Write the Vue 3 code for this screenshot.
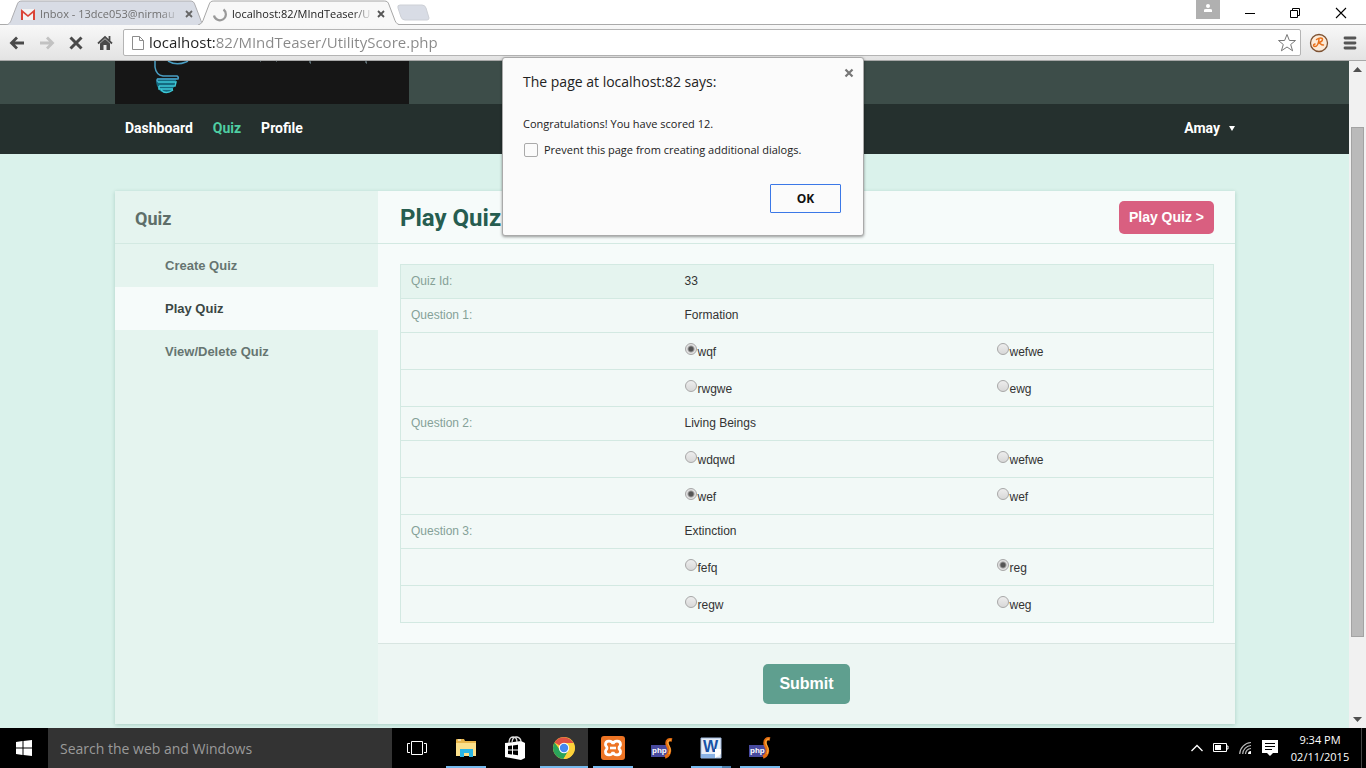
<script setup>
import { ref, reactive } from 'vue'

const quizId = 33
const questions = reactive([
  { title: 'Formation', options: ['wqf', 'wefwe', 'rwgwe', 'ewg'], answer: 0 },
  { title: 'Living Beings', options: ['wdqwd', 'wefwe', 'wef', 'wef'], answer: 2 },
  { title: 'Extinction', options: ['fefq', 'reg', 'regw', 'weg'], answer: 1 }
])
const optionRows = [[0, 1], [2, 3]]
const menu = ['Create Quiz', 'Play Quiz', 'View/Delete Quiz']
const url = ref('localhost:82/MIndTeaser/UtilityScore.php')
const search = ref('')
const prevent = ref(false)
const scroll = { top: '7.7%', height: '80.6%' }
</script>

<template>
  <div class="desktop">
    <div class="tabstrip">
      <div class="tab">
        <svg class="tab-shape" viewBox="0 0 198 25" preserveAspectRatio="none"><path d="M0 25C4 24 5 21 6 18L11 5C12 2 13 1 16 1H184C187 1 188 2 189 5L194 18C195 21 196 24 198 25" fill="#d8dce5" stroke="#adadb0" /></svg>
        <svg class="fav" width="16" height="16" viewBox="0 0 16 16"><path d="M1 3h14v11H1z" fill="#f3f3f3" /><path d="M1 14V3l7 6 7-6v11h-2V7l-5 4-5-4v7z" fill="#db4437" /></svg>
        <span class="tab-title">Inbox - 13dce053@nirmau</span>
        <button class="tab-x" aria-label="Close tab"><svg width="8" height="8" viewBox="0 0 8 8"><path d="M1 1l6 6M7 1L1 7" stroke="#666" stroke-width="1.800" /></svg></button>
      </div>
      <div class="tab current">
        <svg class="tab-shape" viewBox="0 0 204 25" preserveAspectRatio="none"><path d="M0 25C4 24 5 21 6 18L11 5C12 2 13 1 16 1H188C191 1 192 2 193 5L198 18C199 21 200 24 204 25" fill="#f8f8f8" stroke="#a5a5a5" /></svg>
        <svg class="fav" width="16" height="16" viewBox="0 0 16 16"><path d="M11.500 3.500A6 6 0 1 1 2 9.500" fill="none" stroke="#999" stroke-width="2.200" /></svg>
        <span class="tab-title">localhost:82/MIndTeaser/U</span>
        <button class="tab-x" aria-label="Close tab"><svg width="8" height="8" viewBox="0 0 8 8"><path d="M1 1l6 6M7 1L1 7" stroke="#555" stroke-width="1.800" /></svg></button>
      </div>
      <button class="newtab" aria-label="New tab"><svg width="34" height="18" viewBox="0 0 34 18"><path d="M4 1h22q3 0 4 3l3 10q0 2-2 2H9q-3 0-4-3L2 4q-1-3 2-3z" fill="#d8dce5" stroke="#cdd0d6" /></svg></button>
      <div class="win">
        <button class="avatar" aria-label="Profile"><svg width="24" height="19" viewBox="0 0 24 19"><circle cx="12" cy="6" r="2" fill="#fff" /><path d="M8 12V10q0-1 2-1h4q2 0 2 1v2z" fill="#fff" /></svg></button>
        <button aria-label="Minimize"><svg width="46" height="24" viewBox="0 0 46 24"><path d="M17 13.500h10" stroke="#000" /></svg></button>
        <button aria-label="Restore"><svg width="46" height="24" viewBox="0 0 46 24"><path d="M16.500 10.500h7v7h-7zM18.500 10.500v-2h7v7h-2" fill="none" stroke="#000" /></svg></button>
        <button aria-label="Close"><svg width="46" height="24" viewBox="0 0 46 24"><path d="M16 8l10 10M26 8L16 18" stroke="#000" stroke-width="1.100" /></svg></button>
      </div>
    </div>

    <div class="toolbar">
      <button aria-label="Back"><svg width="16" height="14" viewBox="0 0 16 14"><path d="M15 7H3M8 1.500L2.500 7 8 12.500" fill="none" stroke="#4a4a4a" stroke-width="2.800" /></svg></button>
      <button aria-label="Forward"><svg width="16" height="14" viewBox="0 0 16 14"><path d="M1 7h12M8 1.500L13.500 7 8 12.500" fill="none" stroke="#c2c2c2" stroke-width="2.800" /></svg></button>
      <button aria-label="Stop"><svg width="14" height="14" viewBox="0 0 14 14"><path d="M1.500 1.500l11 11M12.500 1.500l-11 11" stroke="#4a4a4a" stroke-width="3" /></svg></button>
      <button aria-label="Home"><svg width="16" height="16" viewBox="0 0 16 16"><path d="M1 8.500L8 2l7 6.500M12.500 5.500V1" fill="none" stroke="#4a4a4a" stroke-width="1.800" /><path d="M3 8.500L8 4l5 4.500V15H9.500v-5h-3v5H3z" fill="#4a4a4a" /></svg></button>
      <div class="omnibox">
        <svg width="14" height="16" viewBox="0 0 14 16"><path d="M1.500 1.500h7l4 4v9h-11zM8.500 1.500v4h4" fill="#fff" stroke="#8c8c8c" /></svg>
        <input v-model="url" type="text" class="address" aria-label="Address">
        <button class="star" aria-label="Bookmark"><svg width="20" height="20" viewBox="0 0 20 20"><path d="M10 1.500l2.400 6h6.100l-4.800 4 1.900 6.300-5.600-3.800-5.600 3.800 1.900-6.300-4.800-4h6.100z" fill="#fff" stroke="#777" stroke-linejoin="round" /></svg></button>
      </div>
      <button aria-label="Extension"><svg width="20" height="20" viewBox="0 0 20 20"><circle cx="10" cy="10" r="8.500" fill="#fdebd8" stroke="#7d5233" stroke-width="1.300" /><path d="M7.500 6.500c3-2 6-2 6 0s-3 3-4.500 3c2 0 3 3 5.500 2.500M10 6.500c-.5 4-2 7-4 7s-2-2 0-2.500" fill="none" stroke="#e8701a" stroke-width="1.500" stroke-linecap="round" /></svg></button>
      <button class="menu" aria-label="Menu"><svg width="14" height="14" viewBox="0 0 14 14"><path d="M2 2h10M2 7h10M2 12h10" stroke="#555" stroke-width="2.800" stroke-linecap="round" /></svg></button>
    </div>

    <div class="viewport">
      <main class="page">
        <header class="banner">
          <div class="wrap">
            <svg class="logo" width="294" height="43" viewBox="0 0 294 43">
              <rect width="294" height="43" fill="#161616" />
              <path d="M42 17h20l-2 5-1 4-3 4-4 2h-3l-4-2-3-5-1-4z" fill="#146a80" />
              <g fill="none" stroke="#4a9fc4" stroke-width="1.500">
                <path d="M40 0v6q1 8 8 9h14q2 1 1 3H43q-2 1 0 3" />
                <path d="M53 0q8 5 18 1l2-1" />
              </g>
              <g fill="none" stroke="#3cc8d6" stroke-width="1.500">
                <path d="M43 21h18l-1 4H44M44 25v3h14M46 29q5 5 12 0" />
              </g>
              <path d="M145 0h1M161 0h1M195 0v2h1M251 0v2h1" stroke="#8098a0" />
            </svg>
          </div>
        </header>
        <nav class="nav">
          <div class="wrap nav-row">
            <a href="#">Dashboard</a>
            <a href="#" class="on">Quiz</a>
            <a href="#">Profile</a>
            <a href="#" class="user">Amay <svg width="6" height="5" viewBox="0 0 6 5"><path d="M0 0h6L3 5z" fill="#fff" /></svg></a>
          </div>
        </nav>
        <section class="wrap card">
          <aside class="side">
            <h2>Quiz</h2>
            <a v-for="item in menu" :key="item" href="#" :class="{ active: item === 'Play Quiz' }">{{ item }}</a>
          </aside>
          <form class="content" @submit.prevent>
            <div class="head">
              <h1>Play Quiz</h1>
              <button type="button" class="play">Play Quiz &gt;</button>
            </div>
            <div class="body">
              <table>
                <colgroup><col class="c1"><col class="c2"><col></colgroup>
                <tbody>
                  <tr class="first"><th scope="row">Quiz Id:</th><td colspan="2">{{ quizId }}</td></tr>
                  <template v-for="(q, i) in questions" :key="i">
                    <tr><th scope="row">Question {{ i + 1 }}:</th><td colspan="2">{{ q.title }}</td></tr>
                    <tr v-for="(row, r) in optionRows" :key="r" class="choice">
                      <td></td>
                      <td v-for="o in row" :key="o">
                        <label><input v-model="q.answer" type="radio" :name="'q' + i" :value="o"><span>{{ q.options[o] }}</span></label>
                      </td>
                    </tr>
                  </template>
                </tbody>
              </table>
            </div>
            <div class="foot"><button type="submit" class="submit">Submit</button></div>
          </form>
        </section>
      </main>
      <div class="scrollbar">
        <button aria-label="Scroll up"><svg width="9" height="5" viewBox="0 0 9 5"><path d="M0 5l4.500-5L9 5z" fill="#505050" /></svg></button>
        <div class="track"><div class="thumb" :style="{ top: scroll.top, height: scroll.height }"></div></div>
        <button aria-label="Scroll down"><svg width="9" height="5" viewBox="0 0 9 5"><path d="M0 0h9L4.500 5z" fill="#505050" /></svg></button>
      </div>
    </div>

    <div class="dialog" role="dialog" aria-labelledby="dlg-title">
      <h3 id="dlg-title">The page at localhost:82 says:</h3>
      <button class="dlg-x" aria-label="Close dialog"><svg width="10" height="10" viewBox="0 0 10 10"><path d="M1.500 1.500l7 7M8.500 1.500l-7 7" stroke="#777" stroke-width="2.200" /></svg></button>
      <p>Congratulations! You have scored 12.</p>
      <label><input v-model="prevent" type="checkbox"><span>Prevent this page from creating additional dialogs.</span></label>
      <div class="dlg-foot"><button class="ok">OK</button></div>
    </div>

    <div class="taskbar">
      <button class="start" aria-label="Start"><svg width="16" height="16" viewBox="0 0 16 16"><path d="M0 2l6.500-1v6.500H0zM7.500.900L16 0v7.500H7.500zM0 8.500h6.500V15L0 14zM7.500 8.500H16V16l-8.500-1z" fill="#fff" /></svg></button>
      <input v-model="search" class="search" type="text" placeholder="Search the web and Windows" aria-label="Search the web and Windows">
      <div class="apps">
        <button aria-label="Task view"><svg width="20" height="16" viewBox="0 0 20 16"><path d="M4.500 1.500h11v13h-11zM3 3.500H.500v9H3M17 3.500h2.500v9H17" fill="none" stroke="#fff" /></svg></button>
        <button class="run" aria-label="File Explorer"><svg width="22" height="20" viewBox="0 0 22 20"><path d="M1 2q0-1 1-1h7l1 2h11v15H1z" fill="#e8b64c" /><path d="M1 5h20v13H1z" fill="#fbe08b" /><path d="M5 19v-8h13v8h-4v-4H9v4z" fill="#29b6e6" /><path d="M3 2h3" stroke="#fff" /></svg></button>
        <button aria-label="Store"><svg width="22" height="24" viewBox="0 0 22 24"><path d="M1 7l16-2 4 2v15l-4 2L1 21z" fill="#fff" /><path d="M5 7q0-6 4-6t4 5M8 6q1-6 5-5t4 5" fill="none" stroke="#ddd" stroke-width="1.300" /><path d="M4 10l4-.5v4H4zM9 9.400l5-.6v4.700H9zM4 14.500h4v4L4 18zM9 14.500h5v4.700l-5-.6z" fill="#000" /></svg></button>
        <button class="run focus" aria-label="Chrome"><svg width="22" height="22" viewBox="0 0 22 22"><circle cx="11" cy="11" r="11" fill="#fdd13a" /><path d="M11 11L1.500 5.500A11 11 0 0 1 20.500 6H11z" fill="#df5144" /><path d="M1.500 5.500A11 11 0 0 0 10.500 22l5-8.500L11 11 7 13z" fill="#2aa35a" /><path d="M11 6h9.500A11 11 0 0 1 10.500 22l5-8.500z" fill="#fdd13a" /><circle cx="11" cy="11" r="5.200" fill="#fff" /><circle cx="11" cy="11" r="4.200" fill="#4688f0" /></svg></button>
        <button class="run" aria-label="XAMPP"><svg width="24" height="24" viewBox="0 0 24 24"><rect width="24" height="24" rx="3" fill="#ed7424" /><path d="M12 8C11 4 4.500 4 4.500 8.500c0 2 1.500 1.500 1.500 3.500s-1.500 1.500-1.500 3.500C4.500 20 11 20 12 16c1 4 7.500 4 7.500-.500 0-2-1.500-1.500-1.500-3.500s1.500-1.500 1.500-3.500C19.500 4 13 4 12 8z" fill="none" stroke="#fff" stroke-width="2.800" /><path d="M9 12h6" stroke="#fff" stroke-width="2.600" /></svg></button>
        <button aria-label="phpStorm"><svg width="24" height="22" viewBox="0 0 24 22"><rect x="1" y="8" width="17" height="12" fill="#484a9e" /><text x="2" y="16" font-family="Liberation Sans" font-weight="700" font-size="8" fill="#fff">php</text><path d="M22 3q-5-1-5 3c0 4 4 5 2 10q-1 3-4 4" fill="none" stroke="#e36b10" stroke-width="3.500" /><path d="M21 3q-4 0-3 4c2 4 3 5 1 10" fill="none" stroke="#ffc04a" /></svg></button>
        <button class="run multi" aria-label="Word"><svg width="22" height="22" viewBox="0 0 22 22"><path d="M1 1h20v20H1z" fill="#e7eef8" stroke="#9fb8dc" /><path d="M1 17h14v4H1z" fill="#8bb3e5" /><text x="3" y="15" font-family="Liberation Sans" font-weight="700" font-size="16" fill="#1751a5">W</text><path d="M15 12h6v5l-6 4z" fill="#fff" /></svg></button>
        <button class="run" aria-label="phpStorm project"><svg width="24" height="22" viewBox="0 0 24 22"><rect x="1" y="8" width="17" height="12" fill="#484a9e" /><text x="2" y="16" font-family="Liberation Sans" font-weight="700" font-size="8" fill="#fff">php</text><path d="M22 2q-5-1-5 4c0 4 4 5 2 10q-1 3-4 4" fill="none" stroke="#e36b10" stroke-width="3.500" /><path d="M21 2q-4 0-3 5c2 4 3 5 1 10" fill="none" stroke="#ffc04a" /></svg></button>
      </div>
      <div class="tray">
        <svg width="12" height="8" viewBox="0 0 12 8"><path d="M.5 7L6 1.500 11.500 7" fill="none" stroke="#fff" stroke-width="1.300" /></svg>
        <svg width="16" height="10" viewBox="0 0 16 10"><path d="M.5.500h13v8H.500zM14 3h1v3h-1" fill="none" stroke="#fff" /><path d="M2 2h6v5H2z" fill="#fff" /></svg>
        <svg width="13" height="14" viewBox="0 0 13 14"><g fill="none" stroke="#bbb" stroke-width="1.200"><path d="M.7 13A12 12 0 0 1 12 1.500M3.700 13A9 9 0 0 1 12 4.500M6.500 13A6 6 0 0 1 12 7.500" /></g><path d="M9 13q0-3 3-3v3z" fill="#fff" /></svg>
        <svg width="16" height="16" viewBox="0 0 16 16"><path d="M0 0h16v13h-5l-3 3-3-3H0z" fill="#fff" /><path d="M3 3.500h10M3 6.500h10M3 9.500h7" stroke="#000" /></svg>
        <div class="clock"><span>9:34 PM</span><span>02/11/2015</span></div>
      </div>
    </div>
  </div>
</template>

<style>
body { margin: 0; overflow: hidden; }
</style>

<style scoped>
.desktop, .desktop * { box-sizing: border-box; }
.desktop { position: relative; display: flex; flex-direction: column; height: 100vh; font-family: "Open Sans", "Noto Sans", sans-serif; }
button { border: 0; padding: 0; background: none; display: flex; align-items: center; justify-content: center; }
svg { display: block; flex: none; }
h1, h2, h3, p { margin: 0; }
a { text-decoration: none; color: inherit; }

.tabstrip { display: flex; height: 24px; background: #fff; flex: none; padding-left: 6px; }
.tab { position: relative; display: flex; align-items: center; width: 198px; height: 25px; padding: 2px 10px 0 14px; font-size: 11px; color: #707070; }
.tab.current { width: 202px; margin-left: -6px; padding-right: 14px; color: #222; z-index: 1; }
.tab-shape { position: absolute; left: 0; top: 0; width: 100%; height: 100%; }
.fav, .tab-title, .tab-x { position: relative; }
.tab-title { flex: 1; margin: 0 3px 0 4px; white-space: nowrap; -webkit-mask-image: linear-gradient(90deg, #000 85%, transparent); mask-image: linear-gradient(90deg, #000 85%, transparent); }
.tab-x { width: 10px; height: 16px; }
.newtab { height: 24px; padding-top: 2px; margin-left: -4px; }
.win { display: flex; margin-left: auto; }
.avatar { height: 19px; background: #b0b0b0; margin-right: 8px; }

.toolbar { display: flex; align-items: center; gap: 14px; height: 37px; flex: none; padding: 0 9px; border-top: 1px solid #aaa; border-bottom: 1px solid #a8a8a8; background: linear-gradient(#f8f8f8, #e3e3e3); }
.omnibox { display: flex; align-items: center; flex: 1; height: 27px; margin-left: -4px; padding: 0 3px 0 7px; background: #fff; border: 1px solid #b4b4b4; border-radius: 2px; }
.toolbar > .omnibox + button { margin-left: -6px; }
.toolbar > button.menu { width: 14px; }
.address { flex: 1; min-width: 0; height: 24px; margin-left: 4px; padding: 0 0 2px; border: 0; outline: 0; font: 15px "Open Sans", sans-serif; color: transparent; background: linear-gradient(90deg, #222 66px, #888 66px) text; -webkit-background-clip: text; caret-color: #222; }

.viewport { display: flex; flex: 1; min-height: 0; }
.page { flex: 1; overflow: hidden; background: #daf2eb; font-family: "Liberation Sans", Arial, sans-serif; }
.wrap { margin: 0 114px 0 115px; }
.banner { display: flow-root; background: #3d4d49; }
.nav { display: flow-root; background: #25302e; color: #fff; margin-bottom: 37px; }
.nav-row { display: flex; align-items: center; gap: 20px; height: 50px; padding: 0 0 2px 10px; font: 700 14px Roboto, sans-serif; }
.nav .on { color: #4fcea3; }
.user { display: flex; align-items: center; gap: 9px; margin-left: auto; }
.card { display: flex; background: #f6fbfa; box-shadow: 0 1px 4px rgba(0, 80, 60, .22); }
.side { width: 263px; flex: none; background: #e5f4ef; }
.side h2 { height: 53px; padding-left: 20px; border-bottom: 1px solid #d3e9e2; font: 700 18px/55px Roboto, sans-serif; color: #5e6e69; }
.side a { display: block; padding-left: 50px; font-size: 13px; font-weight: 700; line-height: 43px; color: #667571; }
.side a.active { background: #f6fbfa; color: #3b4744; }
.content { flex: 1; }
.head { display: flex; align-items: center; justify-content: space-between; height: 53px; padding: 0 21px 0 22px; border-bottom: 1px solid #d3e9e2; }
.head h1 { padding-top: 2px; font: 700 24px Roboto, sans-serif; color: #265d50; }
.play { height: 33px; padding: 0 10px; border-radius: 5px; background: #d95f80; color: #fff; font: 700 14px "Liberation Sans", Arial, sans-serif; }
.body { padding: 20px 21px 20px 22px; }
table { width: 100%; border-collapse: collapse; table-layout: fixed; border: 1px solid #d3e9e2; background: #f2f9f7; font-size: 12px; color: #333; }
.c1 { width: 274px; }
.c2 { width: 312px; }
tr { border-bottom: 1px solid #d3e9e2; }
.first { background: #e5f4ef; }
th, td { padding: 9px 10px; line-height: 15px; text-align: left; font-weight: 400; }
th { color: #85a197; }
.choice td { padding: 10px 10px 8px; line-height: 18px; }
.choice label { display: flex; align-items: flex-start; gap: 1px; }
.choice input { appearance: none; width: 12px; height: 12px; margin: 0; border: 1px solid #a8a8a8; border-radius: 50%; background: linear-gradient(#ededed, #d8d8d8); }
.choice input:checked { background: radial-gradient(circle, #555 0 2px, #e2e2e2 4px); }
.foot { display: flex; justify-content: center; padding: 20px; border-top: 1px solid #d8e5e1; background: #edf6f3; }
.submit { height: 40px; padding: 0 16px; border-radius: 5px; background: #5f9f8f; color: #fff; font: 700 16px "Liberation Sans", Arial, sans-serif; }

.scrollbar { display: flex; flex-direction: column; width: 17px; flex: none; background: #f1f1f1; }
.scrollbar button { height: 17px; }
.track { position: relative; flex: 1; }
.thumb { position: absolute; left: 2px; right: 2px; background: #bababa; border: 1px solid #a3a3a3; }

.dialog { position: absolute; top: 57px; left: 0; right: 0; width: 362px; margin: 0 auto; padding: 14px 22px 22px 20px; background: #fbfbfb; border: 1px solid #aaa; border-radius: 3px; box-shadow: 0 1px 3px rgba(0, 0, 0, .4); z-index: 5; font-size: 11px; color: #222; }
.dialog h3 { font-size: 14px; line-height: 20px; font-weight: 400; }
.dlg-x { position: absolute; top: 10px; right: 9px; }
.dialog p { margin: 23px 0 8px; line-height: 18px; }
.dialog label { display: flex; align-items: center; gap: 6px; line-height: 18px; }
.dialog input { appearance: none; width: 14px; height: 14px; margin: 0 0 0 1px; border: 1px solid #aaa; border-radius: 2px; background: #fbfbfb; }
.dlg-foot { display: flex; justify-content: flex-end; margin-top: 25px; }
.ok { width: 71px; height: 29px; border: 1px solid #3b78e7; border-radius: 1px; font: 700 12px "Open Sans", sans-serif; color: #111; }

.taskbar { display: flex; height: 40px; flex: none; background: #000; color: #fff; }
.start { width: 48px; }
.search { width: 344px; padding: 0 12px; border: 0; outline: 0; background: #333; color: #fff; font: 14px "Open Sans", sans-serif; }
.search::placeholder { color: #9a9a9a; opacity: 1; }
.apps { display: flex; gap: 1px; padding-left: 1px; }
.apps button { position: relative; width: 48px; }
.run::after { content: ""; position: absolute; left: 4px; right: 4px; bottom: 0; height: 2px; background: #76b9ed; }
.run.focus { background: #333; }
.run.focus::after { left: 0; right: 0; }
.multi::after { background: linear-gradient(90deg, #76b9ed 31px, #4d80ad 31px); }
.tray { display: flex; align-items: center; gap: 10px; margin-left: auto; padding-right: 4px; }
.clock { display: flex; flex-direction: column; align-items: center; width: 74px; height: 40px; justify-content: center; padding-right: 9px; border-right: 1px solid #444; font-size: 11px; line-height: 17px; }
</style>
